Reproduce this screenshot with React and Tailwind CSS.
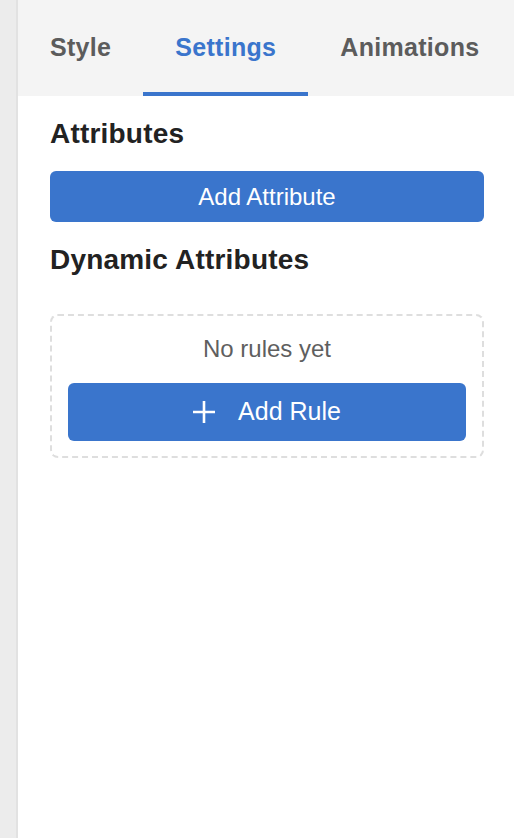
import React, { useState } from "react";

const tabs = ["Style", "Settings", "Animations"];

const PlusIcon = () => (
  <svg width="22" height="22" viewBox="0 0 22 22" fill="none">
    <path d="M0 11h22M11 0v22" stroke="white" strokeWidth="2.6" />
  </svg>
);

const App = () => {
  const [active, setActive] = useState("Settings");

  return (
    <div
      className="flex h-[838px] w-[514px] bg-white"
      style={{ fontFamily: '"Liberation Sans", Arial, sans-serif' }}
    >
      {/* left edge strip */}
      <div className="w-[18px] shrink-0 bg-[#ececec] border-r-2 border-[#e2e2e2]" />

      <div className="flex-1 flex flex-col">
        {/* Tabs */}
        <div className="flex h-[96px] bg-[#f4f4f4]">
          {tabs.map((t) => (
            <button
              key={t}
              onClick={() => setActive(t)}
              className={`px-8 pt-[4px] border-b-4 text-[25px] tracking-[0.3px] font-bold ${
                active === t
                  ? "text-[#3a75cc] border-[#3a75cc]"
                  : "text-[#5c5c5c] border-transparent"
              }`}
            >
              {t}
            </button>
          ))}
        </div>

        {/* Content */}
        <div className="pl-8 pr-[30px]">
          <h2 className="mt-[22px] text-[28px] leading-[32px] tracking-[0.2px] font-bold text-[#222]">
            Attributes
          </h2>
          <button className="mt-[21px] w-full h-[51px] rounded-[6px] bg-[#3a75cc] text-white text-[24px]">
            Add Attribute
          </button>

          <h2 className="mt-[22px] text-[28px] leading-[32px] tracking-[0.2px] font-bold text-[#222]">
            Dynamic Attributes
          </h2>

          <div className="mt-[38px] border-2 border-dashed border-[#dedede] rounded-[8px] px-4 pt-[19px] pb-[15px]">
            <p className="text-center text-[24px] leading-[28px] text-[#5f5f5f]">
              No rules yet
            </p>
            <button className="mt-[20px] w-full h-[58px] rounded-[6px] bg-[#3a75cc] text-white text-[25px] flex items-center justify-center gap-[23px]">
              <PlusIcon />
              <span>Add Rule</span>
            </button>
          </div>
        </div>
      </div>
    </div>
  );
};

export default App;
